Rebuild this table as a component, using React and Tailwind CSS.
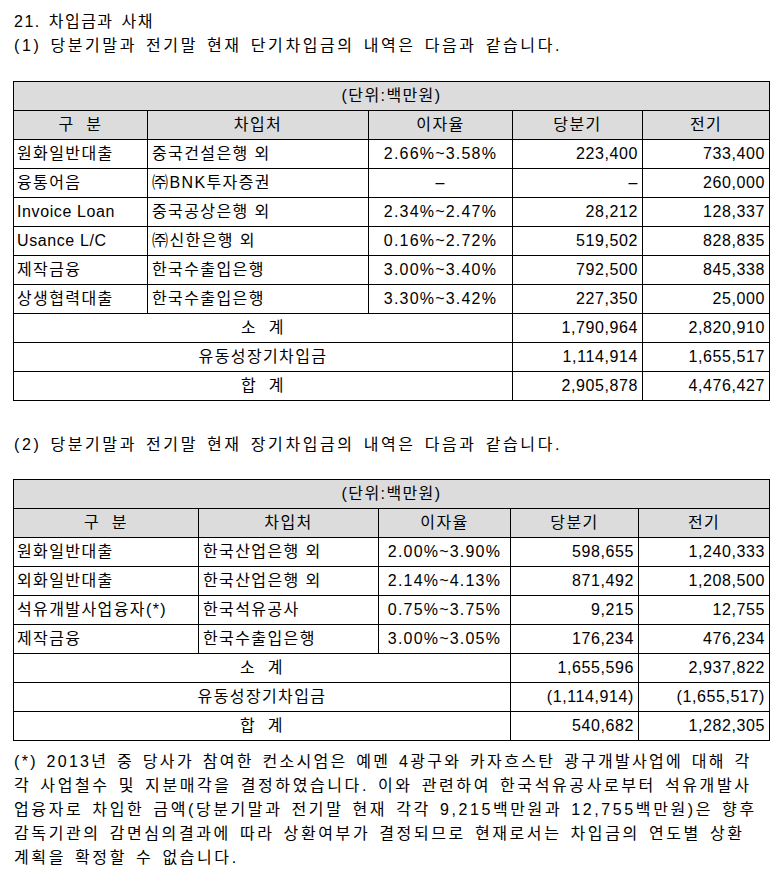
import React from 'react';

const shortRows = [
    ['원화일반대출', '중국건설은행 외', '2.66%~3.58%', '223,400', '733,400'],
    ['융통어음', '㈜BNK투자증권', '–', '–', '260,000'],
    ['Invoice Loan', '중국공상은행 외', '2.34%~2.47%', '28,212', '128,337'],
    ['Usance L/C', '㈜신한은행 외', '0.16%~2.72%', '519,502', '828,835'],
    ['제작금융', '한국수출입은행', '3.00%~3.40%', '792,500', '845,338'],
    ['상생협력대출', '한국수출입은행', '3.30%~3.42%', '227,350', '25,000'],
]

const shortTotals = [
    ['소\u00a0\u00a0계', '1,790,964', '2,820,910'],
    ['유동성장기차입금', '1,114,914', '1,655,517'],
    ['합\u00a0\u00a0계', '2,905,878', '4,476,427'],
]

const longRows = [
    ['원화일반대출', '한국산업은행 외', '2.00%~3.90%', '598,655', '1,240,333'],
    ['외화일반대출', '한국산업은행 외', '2.14%~4.13%', '871,492', '1,208,500'],
    ['석유개발사업융자(*)', '한국석유공사', '0.75%~3.75%', '9,215', '12,755'],
    ['제작금융', '한국수출입은행', '3.00%~3.05%', '176,234', '476,234'],
]

const longTotals = [
    ['소\u00a0\u00a0계', '1,655,596', '2,937,822'],
    ['유동성장기차입금', '(1,114,914)', '(1,655,517)'],
    ['합\u00a0\u00a0계', '540,682', '1,282,305'],
]

const cell = 'border border-black h-[29px] p-0 align-middle whitespace-nowrap'
const gray = 'bg-[#dcdcdc]'
const num = 'text-right pr-[4px] tracking-[0.6px]'

const LoanTable = ({ widths, rows, totals }) => {
    return (
        <table className='table-fixed border-collapse w-[757px] ml-[13px] tracking-[1.4px] [word-spacing:0px]'>
            <colgroup>
                {widths.map((w, i) => <col key={i} style={{ width: w }} />)}
            </colgroup>
            <tbody>
                <tr>
                    <td colSpan={5} className={`${cell} ${gray} text-center`}>(단위:백만원)</td>
                </tr>
                <tr>
                    <td className={`${cell} ${gray} text-center`}>구&nbsp;&nbsp;분</td>
                    <td className={`${cell} ${gray} text-center`}>차입처</td>
                    <td className={`${cell} ${gray} text-center`}>이자율</td>
                    <td className={`${cell} ${gray} text-center`}>당분기</td>
                    <td className={`${cell} ${gray} text-center`}>전기</td>
                </tr>
                {rows.map(r => (
                    <tr key={r[0]}>
                        <td className={`${cell} pl-[3px] ${/^[A-Za-z]/.test(r[0]) ? 'tracking-[0.6px]' : ''}`}>{r[0]}</td>
                        <td className={`${cell} pl-[4px]`}>{r[1]}</td>
                        <td className={`${cell} text-center tracking-[1.2px]`}>{r[2]}</td>
                        <td className={`${cell} ${num}`}>{r[3]}</td>
                        <td className={`${cell} ${num}`}>{r[4]}</td>
                    </tr>
                ))}
                {totals.map(t => (
                    <tr key={t[0]}>
                        <td colSpan={3} className={`${cell} text-center`}>{t[0]}</td>
                        <td className={`${cell} ${num}`}>{t[1]}</td>
                        <td className={`${cell} ${num}`}>{t[2]}</td>
                    </tr>
                ))}
            </tbody>
        </table>
    )
}

const App = () => {
    return (
        <div className="w-[784px] min-h-[876px] bg-white text-black text-[16px] leading-[24px] [word-spacing:2px] font-['Liberation_Sans','Noto_Sans_CJK_KR',sans-serif] pt-[10px]">
            <div className='pl-[14px] tracking-[1.5px]'>21. 차입금과 사채</div>
            <div className='pl-[14px] tracking-[2.6px]'>(1) 당분기말과 전기말 현재 단기차입금의 내역은 다음과 같습니다.</div>

            <div className='mt-[23px]'>
                <LoanTable widths={['134px', '221px', '144px', '130px', '127px']} rows={shortRows} totals={shortTotals} />
            </div>

            <div className='pl-[14px] mt-[32px] tracking-[2.6px]'>(2) 당분기말과 전기말 현재 장기차입금의 내역은 다음과 같습니다.</div>

            <div className='mt-[22px]'>
                <LoanTable widths={['185px', '180px', '132px', '128px', '131px']} rows={longRows} totals={longTotals} />
            </div>

            <div className='pl-[14px] mt-[9px] whitespace-nowrap tracking-[2.6px]'>
                <div className='tracking-[2.3px]'>(*) 2013년 중 당사가 참여한 컨소시엄은 예멘 4광구와 카자흐스탄 광구개발사업에 대해 각</div>
                <div>각 사업철수 및 지분매각을 결정하였습니다. 이와 관련하여 한국석유공사로부터 석유개발사</div>
                <div>업융자로 차입한 금액(당분기말과 전기말 현재 각각 9,215백만원과 12,755백만원)은 향후</div>
                <div>감독기관의 감면심의결과에 따라 상환여부가 결정되므로 현재로서는 차입금의 연도별 상환</div>
                <div>계획을 확정할 수 없습니다.</div>
            </div>
        </div>
    );
};

export default App;
